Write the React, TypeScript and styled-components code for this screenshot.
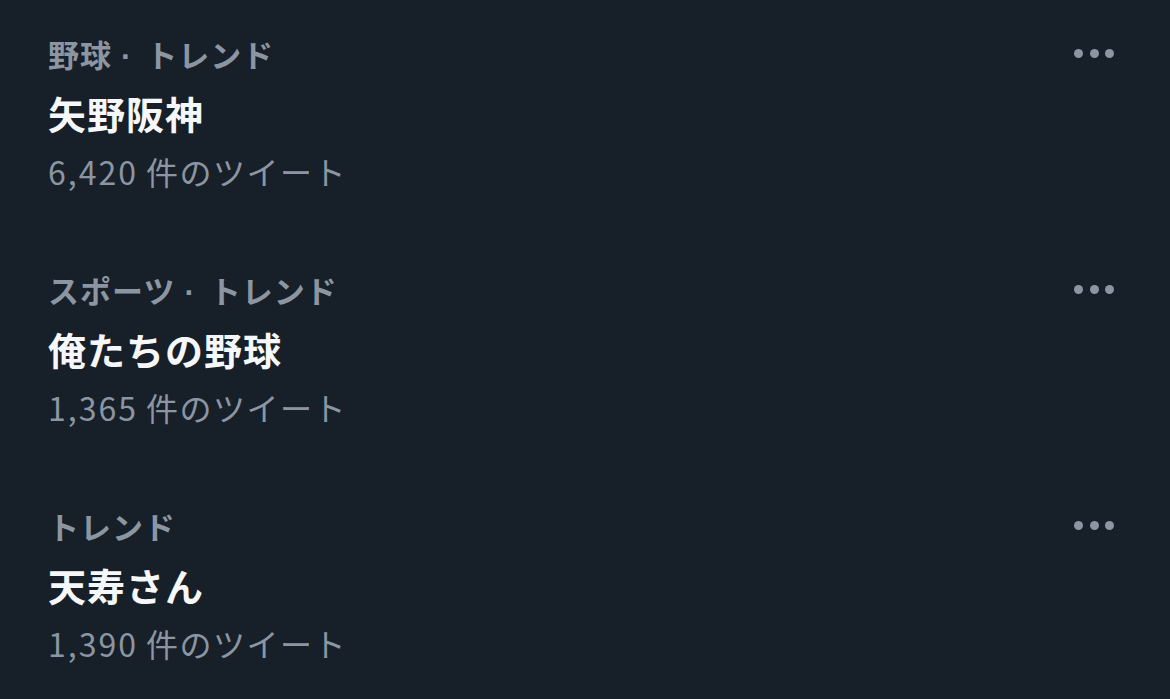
import React from "react";
import styled, { createGlobalStyle } from "styled-components";

const GlobalStyle = createGlobalStyle`
  html, body {
    margin: 0;
    padding: 0;
    background: #171f28;
  }
  body {
    font-family: "Noto Sans CJK JP", "Noto Sans", sans-serif;
  }
`;

const Page = styled.div`
  width: 1170px;
  height: 699px;
  background: #171f28;
  overflow: hidden;
  padding: 24px 0 0;
  box-sizing: border-box;
`;

const TrendRow = styled.div`
  display: flex;
  align-items: flex-start;
  justify-content: space-between;
  padding: 0 56px 59px 48px;
`;

const TrendBody = styled.div`
  display: flex;
  flex-direction: column;
`;

const Category = styled.div`
  height: 59px;
  line-height: 59px;
  font-size: 31px;
  font-weight: 700;
  letter-spacing: 1px;
  color: #8b96a2;
`;

const Sep = styled.span`
  font-family: "Liberation Sans", Arial, sans-serif;
  font-weight: 700;
  margin: 0 14px 0 9px;
`;

const Title = styled.div`
  height: 59px;
  line-height: 59px;
  font-size: 38px;
  font-weight: 700;
  letter-spacing: 1px;
  color: #f5f7f9;
`;

const Count = styled.div`
  height: 59px;
  line-height: 59px;
  font-size: 32px;
  font-weight: 400;
  letter-spacing: 1.5px;
  color: #8b96a2;
`;

const Num = styled.span`
  letter-spacing: 2px;
  margin-right: 8px;
`;

const MoreButton = styled.button`
  display: flex;
  align-items: center;
  gap: 6.5px;
  height: 59px;
  padding: 0;
  border: none;
  background: transparent;
  cursor: pointer;
`;

const Dot = styled.span`
  width: 9px;
  height: 9px;
  border-radius: 50%;
  background: #8b96a2;
`;

interface Trend {
  category: string[];
  title: string;
  count: string;
}

const trends: Trend[] = [
  { category: ["野球", "トレンド"], title: "矢野阪神", count: "6,420" },
  { category: ["スポーツ", "トレンド"], title: "俺たちの野球", count: "1,365" },
  { category: ["トレンド"], title: "天寿さん", count: "1,390" },
];

const App: React.FC = () => {
  return (
    <>
      <GlobalStyle />
      <Page>
        {trends.map((t) => (
          <TrendRow key={t.title}>
            <TrendBody>
              <Category>
                {t.category.map((c, i) => (
                  <React.Fragment key={c}>
                    {i > 0 && <Sep>·</Sep>}
                    {c}
                  </React.Fragment>
                ))}
              </Category>
              <Title>{t.title}</Title>
              <Count>
                <Num>{t.count}</Num>件のツイート
              </Count>
            </TrendBody>
            <MoreButton aria-label="More">
              <Dot />
              <Dot />
              <Dot />
            </MoreButton>
          </TrendRow>
        ))}
      </Page>
    </>
  );
};

export default App;
